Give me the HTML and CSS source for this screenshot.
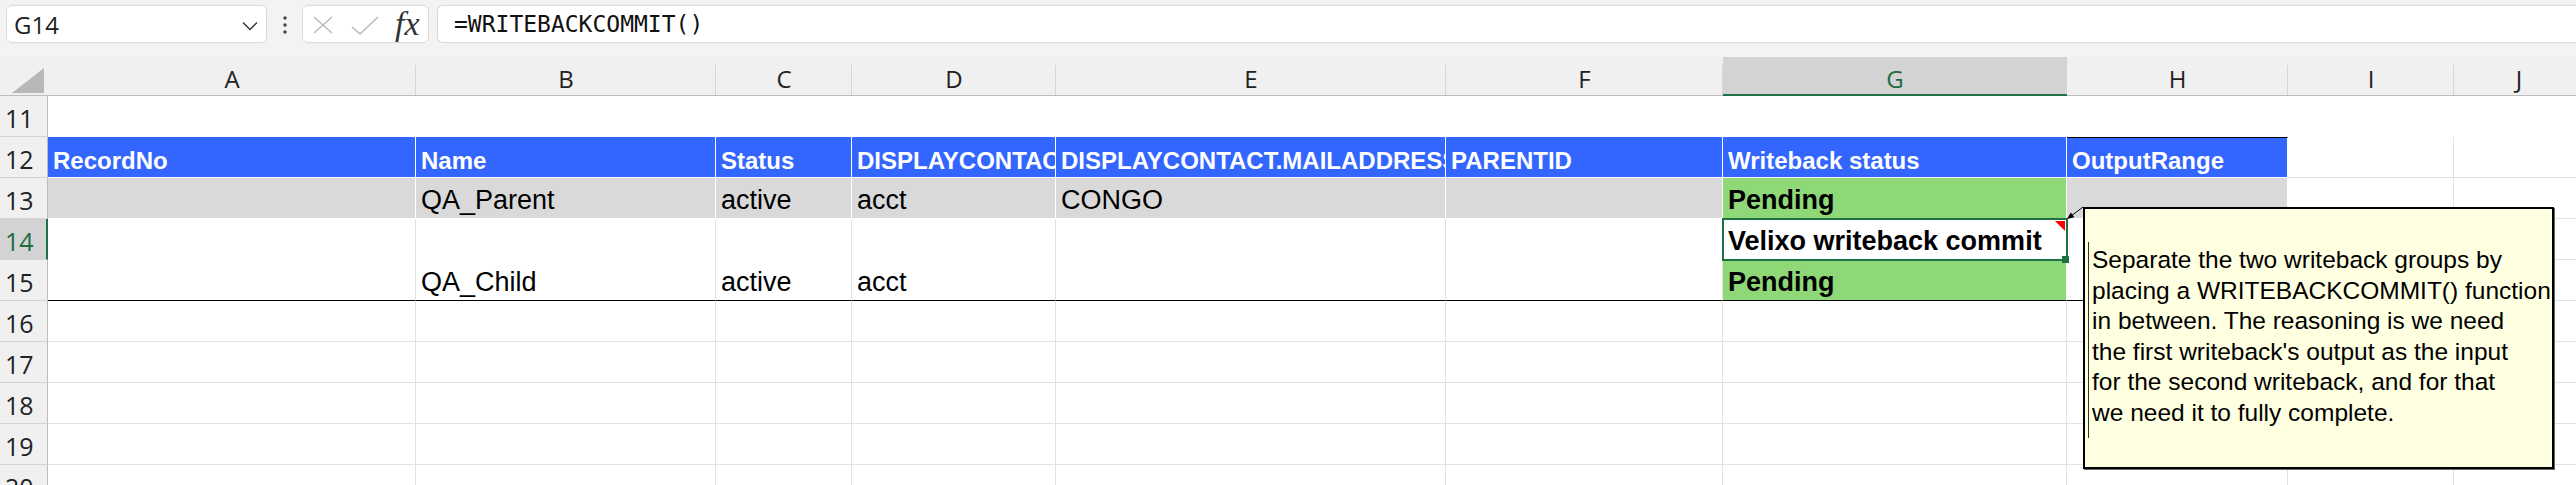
FILE: index.html
```html
<!DOCTYPE html>
<html lang="en">
<head>
  <meta charset="UTF-8" />
  <meta name="viewport" content="width=device-width, initial-scale=1.0" />
  <title>Writeback commit</title>
  <link rel="stylesheet" href="styles.css">
</head>
<body>
  <div class="app">
    <!-- name box + formula bar -->
    <div class="formula-bar">
      <div class="name-box">
        <span>G14</span>
        <svg class="chevron" width="16" height="10" viewBox="0 0 16 10"><polyline points="1,1.5 8,8.5 15,1.5" fill="none" stroke="#333" stroke-width="1.4"/></svg>
      </div>
      <svg class="grip" width="4" height="38" viewBox="0 0 4 38"><circle cx="2" cy="13" r="1.7" fill="#444"/><circle cx="2" cy="20" r="1.7" fill="#444"/><circle cx="2" cy="27" r="1.7" fill="#444"/></svg>
      <div class="fx-buttons">
        <svg class="btn-cancel" width="20" height="18" viewBox="0 0 20 18"><path d="M1 1L19 17M19 1L1 17" stroke="#b8b8b8" stroke-width="1.4" fill="none"/></svg>
        <svg class="btn-enter" width="28" height="20" viewBox="0 0 28 20"><polyline points="1,11 9,18 27,1" fill="none" stroke="#b8b8b8" stroke-width="1.4"/></svg>
        <span class="fx">fx</span>
      </div>
      <div class="formula-input">=WRITEBACKCOMMIT()</div>
    </div>

    <div class="sheet">
      <!-- column headers -->
      <div class="corner"><svg width="48" height="38" viewBox="0 0 48 38"><polygon points="12,36 44,36 44,11" fill="#b8b8b8"/></svg></div>
      <div class="col-head">A</div>
      <div class="col-head">B</div>
      <div class="col-head">C</div>
      <div class="col-head">D</div>
      <div class="col-head">E</div>
      <div class="col-head">F</div>
      <div class="col-head active">G</div>
      <div class="col-head">H</div>
      <div class="col-head">I</div>
      <div class="col-head">J</div>

      <!-- row 11 -->
      <div class="row-head">11</div>
      <div class="cell bare"></div>
      <div class="cell bare"></div>
      <div class="cell bare"></div>
      <div class="cell bare"></div>
      <div class="cell bare"></div>
      <div class="cell bare"></div>
      <div class="cell bare"></div>
      <div class="cell bare"></div>
      <div class="cell bare"></div>
      <div class="cell bare"></div>

      <!-- row 12: table header -->
      <div class="row-head">12</div>
      <div class="cell th">RecordNo</div>
      <div class="cell th">Name</div>
      <div class="cell th">Status</div>
      <div class="cell th">DISPLAYCONTACT</div>
      <div class="cell th">DISPLAYCONTACT.MAILADDRESS</div>
      <div class="cell th">PARENTID</div>
      <div class="cell th">Writeback status</div>
      <div class="cell th top-edge">OutputRange</div>
      <div class="cell"></div>
      <div class="cell"></div>

      <!-- row 13 -->
      <div class="row-head">13</div>
      <div class="cell band"></div>
      <div class="cell band">QA_Parent</div>
      <div class="cell band">active</div>
      <div class="cell band">acct</div>
      <div class="cell band">CONGO</div>
      <div class="cell band"></div>
      <div class="cell ok">Pending</div>
      <div class="cell band"></div>
      <div class="cell"></div>
      <div class="cell"></div>

      <!-- row 14 -->
      <div class="row-head active">14</div>
      <div class="cell open"></div>
      <div class="cell open"></div>
      <div class="cell open"></div>
      <div class="cell open"></div>
      <div class="cell open"></div>
      <div class="cell open"></div>
      <div class="cell sel">Velixo writeback commit</div>
      <div class="cell open"></div>
      <div class="cell"></div>
      <div class="cell"></div>

      <!-- row 15 -->
      <div class="row-head">15</div>
      <div class="cell last"></div>
      <div class="cell last">QA_Child</div>
      <div class="cell last">active</div>
      <div class="cell last">acct</div>
      <div class="cell last"></div>
      <div class="cell last"></div>
      <div class="cell ok last">Pending</div>
      <div class="cell last"></div>
      <div class="cell"></div>
      <div class="cell"></div>

      <div class="row-head">16</div>
      <div class="cell"></div><div class="cell"></div><div class="cell"></div><div class="cell"></div><div class="cell"></div>
      <div class="cell"></div><div class="cell"></div><div class="cell"></div><div class="cell"></div><div class="cell"></div>

      <div class="row-head">17</div>
      <div class="cell"></div><div class="cell"></div><div class="cell"></div><div class="cell"></div><div class="cell"></div>
      <div class="cell"></div><div class="cell"></div><div class="cell"></div><div class="cell"></div><div class="cell"></div>

      <div class="row-head">18</div>
      <div class="cell"></div><div class="cell"></div><div class="cell"></div><div class="cell"></div><div class="cell"></div>
      <div class="cell"></div><div class="cell"></div><div class="cell"></div><div class="cell"></div><div class="cell"></div>

      <div class="row-head">19</div>
      <div class="cell"></div><div class="cell"></div><div class="cell"></div><div class="cell"></div><div class="cell"></div>
      <div class="cell"></div><div class="cell"></div><div class="cell"></div><div class="cell"></div><div class="cell"></div>

      <div class="row-head">20</div>
      <div class="cell"></div><div class="cell"></div><div class="cell"></div><div class="cell"></div><div class="cell"></div>
      <div class="cell"></div><div class="cell"></div><div class="cell"></div><div class="cell"></div><div class="cell"></div>
    </div>

    <!-- cell comment on G14 -->
    <svg class="comment-arrow" width="24" height="20" viewBox="0 0 24 20">
      <line x1="21" y1="5" x2="7" y2="15.6" stroke="#000" stroke-width="1"/>
      <polygon points="5,17 12.4,15.2 8.8,10.4" fill="#000"/>
    </svg>
    <div class="comment">
      Separate the two writeback groups by<br>
      placing a WRITEBACKCOMMIT() function<br>
      in between. The reasoning is we need<br>
      the first writeback's output as the input<br>
      for the second writeback, and for that<br>
      we need it to fully complete.
    </div>
  </div>
</body>
</html>
```

FILE: styles.css
```css
* {
  margin: 0;
  padding: 0;
  box-sizing: border-box;
}

body {
  width: 2576px;
  height: 485px;
  overflow: hidden;
  background: #fff;
  font-family: "Liberation Sans", Arial, sans-serif;
  color: #000;
}

.app {
  position: relative;
  height: 485px;
}

/* formula bar */

.formula-bar {
  display: flex;
  align-items: flex-start;
  height: 57px;
  padding: 5px 0 0 6px;
  background: #f3f3f3;
}

.name-box {
  display: flex;
  align-items: center;
  justify-content: space-between;
  width: 261px;
  height: 38px;
  padding: 0 8px 0 7px;
  background: #fff;
  border: 1px solid #dadada;
  border-radius: 6px;
  font-family: "Open Sans", sans-serif;
  font-size: 24px;
  color: #222;
}

.chevron {
  margin-top: 4px;
}

.grip {
  margin-left: 16px;
}

.fx-buttons {
  display: flex;
  align-items: flex-start;
  width: 127px;
  height: 38px;
  margin-left: 15px;
  padding-left: 10px;
  background: #fff;
  border: 1px solid #dadada;
  border-radius: 6px;
}

.btn-cancel {
  margin-top: 10px;
}

.btn-enter {
  margin-top: 10px;
  margin-left: 18px;
}

.fx {
  margin-left: 16px;
  font-family: "Liberation Serif", serif;
  font-style: italic;
  font-size: 34px;
  line-height: 36px;
  color: #333;
}

.formula-input {
  display: flex;
  align-items: center;
  flex: 1;
  height: 38px;
  margin-left: 8px;
  padding-left: 16px;
  background: #fff;
  border: 1px solid #dadada;
  border-right: none;
  border-radius: 6px 0 0 6px;
  font-family: "DejaVu Sans Mono", "Liberation Mono", monospace;
  font-size: 23px;
  color: #111;
}

/* grid */

.sheet {
  display: grid;
  grid-template-columns: 48px 368px 300px 136px 204px 390px 277px 344px 221px 166px 130px;
  grid-template-rows: 39px;
  grid-auto-rows: 41px;
}

.corner {
  background: #f0f0f0;
  border-bottom: 1px solid #bdbdbd;
}

.corner svg {
  display: block;
}

.col-head {
  display: flex;
  align-items: center;
  justify-content: center;
  padding-top: 5px;
  background: linear-gradient(#d6d6d6, #d6d6d6) right 8px / 1px calc(100% - 8px) no-repeat, #f0f0f0;
  border-bottom: 1px solid #bdbdbd;
  font-family: "Open Sans", sans-serif;
  font-size: 24px;
  color: #222;
}

.col-head.active {
  background-color: #d3d3d3;
  border-bottom: 2px solid #1e7145;
  color: #1e6b41;
}

.row-head {
  display: flex;
  align-items: flex-end;
  padding: 0 0 5px 5px;
  background: #f0f0f0;
  border-right: 1px solid #bdbdbd;
  border-bottom: 1px solid #d4d4d4;
  font-family: "Open Sans", sans-serif;
  font-size: 25px;
  line-height: 1;
  color: #222;
}

.row-head.active {
  background: #d3d3d3;
  border-right: 2px solid #1e7145;
  color: #1e6b41;
}

.cell {
  display: flex;
  align-items: flex-end;
  padding: 0 4px 4px 5px;
  overflow: hidden;
  white-space: nowrap;
  border-right: 1px solid #e1e1e1;
  border-bottom: 1px solid #e1e1e1;
  font-size: 27px;
  line-height: 1;
}

.cell.bare {
  border-color: transparent;
}

.cell.th {
  background: #3366ff;
  border-color: #fff;
  color: #fff;
  font-weight: 700;
  font-size: 24px;
}

.cell.top-edge {
  border-top: 1px solid #000;
}

.cell.band {
  background: #d9d9d9;
  border-color: #fff;
}

.cell.ok {
  background: #8ed878;
  border-color: #fff;
  font-weight: 700;
  font-size: 27px;
}

.cell.open {
  border-bottom-color: #fff;
}

.cell.last {
  border-bottom-color: #000;
}

.cell.sel {
  position: relative;
  overflow: visible;
  border-bottom-color: #fff;
  outline: 2px solid #1e7145;
  outline-offset: -1px;
  font-weight: 700;
  font-size: 27px;
}

/* comment indicator */
.cell.sel::before {
  content: "";
  position: absolute;
  top: 2px;
  right: 1px;
  border-top: 10px solid #f00;
  border-left: 10px solid transparent;
}

/* fill handle */
.cell.sel::after {
  content: "";
  position: absolute;
  right: -3px;
  bottom: -4px;
  width: 7px;
  height: 7px;
  background: #1e7145;
}

/* comment */

.comment-arrow {
  position: absolute;
  left: 2062px;
  top: 202px;
}

.comment {
  position: absolute;
  left: 2083px;
  top: 207px;
  width: 471px;
  height: 262px;
  padding: 36px 0 0 7px;
  background: #ffffe1;
  border: 2px solid #000;
  box-shadow: 1px 1px 0 #666;
  font-size: 24.5px;
  line-height: 30.5px;
  white-space: nowrap;
}

.comment::before {
  content: "";
  position: absolute;
  left: 3px;
  top: 33px;
  width: 1px;
  height: 196px;
  background: #333;
}
```
